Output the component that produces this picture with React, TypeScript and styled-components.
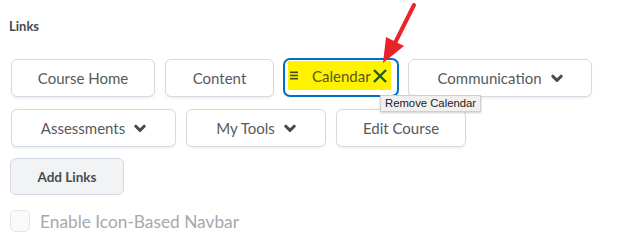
import styled, { createGlobalStyle } from "styled-components";

const Global = createGlobalStyle`
  body {
    margin: 0;
    background: #ffffff;
    font-family: Lato, "Open Sans", sans-serif;
  }
`;

const Page = styled.div`
  position: relative;
  width: 623px;
  height: 252px;
  padding: 18px 0 0 10px;
  box-sizing: border-box;
  overflow: hidden;
`;

const Label = styled.div`
  font-size: 13px;
  font-weight: 700;
  color: #494c4e;
  line-height: 16px;
  margin: 0 0 25px -1px;
`;

const Row = styled.div`
  display: flex;
  gap: 10px;
  margin-bottom: 12px;
  padding-left: 1px;
`;

const NavButton = styled.div<{ $w: number }>`
  position: relative;
  display: flex;
  align-items: center;
  justify-content: center;
  gap: 9px;
  width: ${(p) => p.$w}px;
  height: 38px;
  box-sizing: border-box;
  border: 1px solid #d3d9e3;
  border-radius: 6px;
  box-shadow: 0 2px 2px rgba(0, 0, 0, 0.05);
  font-size: 15px;
  color: #565a5c;
  background: #ffffff;
`;

const Selected = styled.div`
  position: relative;
  width: 116px;
  height: 39px;
  margin: -1px -1px 0;
  box-sizing: border-box;
  border: 2px solid #006fbf;
  border-radius: 7px;
  padding: 1px 6px 5px 3px;
  background: #ffffff;
`;

const Highlight = styled.div`
  display: flex;
  align-items: center;
  height: 100%;
  background: #fff200;
  padding: 0 0 0 2px;
  font-size: 15px;
  color: #58581e;
`;

const CalText = styled.span`
  margin: 0 1px 0 13px;
`;

const Tooltip = styled.div`
  position: absolute;
  left: 95px;
  top: 35px;
  z-index: 2;
  white-space: nowrap;
  padding: 1px 4px 2px;
  font-family: "Liberation Sans", Arial, sans-serif;
  font-size: 11.3px;
  color: #222222;
  background: #f2f0ef;
  border: 1px solid #cfcfcf;
  box-shadow: 0 1px 2px rgba(0, 0, 0, 0.2);
`;

const AddButton = styled.div`
  display: flex;
  align-items: center;
  justify-content: center;
  width: 114px;
  height: 37px;
  box-sizing: border-box;
  border: 1px solid #d3d9e3;
  border-radius: 6px;
  background: #f1f3f5;
  font-size: 13.5px;
  font-weight: 700;
  color: #494c4e;
  margin-top: -1px;
`;

const CheckRow = styled.div`
  display: flex;
  align-items: center;
  gap: 10px;
  margin-top: 15px;
`;

const Box = styled.div`
  width: 20px;
  height: 22px;
  box-sizing: border-box;
  border: 1px solid #e3e6e9;
  border-radius: 5px;
  background: #f9fafb;
`;

const CheckLabel = styled.span`
  font-size: 17.3px;
  color: #a6a9ab;
`;

const Arrow = styled.svg`
  position: absolute;
  left: 370px;
  top: 0;
  z-index: 3;
`;

function Chevron() {
  return (
    <svg width="12" height="9" viewBox="0 0 12 9">
      <polyline
        points="1.8,2.2 6,6.4 10.2,2.2"
        fill="none"
        stroke="#494c4e"
        strokeWidth="3"
        strokeLinecap="round"
        strokeLinejoin="round"
      />
    </svg>
  );
}

function Hamburger() {
  return (
    <svg width="9" height="9" viewBox="0 0 9 9">
      <rect x="0" y="0.5" width="8" height="1.6" fill="#4a4a20" />
      <rect x="0" y="3.7" width="8" height="1.6" fill="#4a4a20" />
      <rect x="0" y="6.9" width="8" height="1.6" fill="#4a4a20" />
    </svg>
  );
}

function Cross() {
  return (
    <svg width="16" height="16" viewBox="0 0 16 16">
      <path d="M2 2 L14 14 M14 2 L2 14" stroke="#1f5a1f" strokeWidth="2.4" />
    </svg>
  );
}

export default function App() {
  return (
    <>
      <Global />
      <Page>
        <Label>Links</Label>
        <Row>
          <NavButton $w={144}>Course Home</NavButton>
          <NavButton $w={109}>Content</NavButton>
          <Selected>
            <Highlight>
              <Hamburger />
              <CalText>Calendar</CalText>
              <Cross />
            </Highlight>
            <Tooltip>Remove Calendar</Tooltip>
          </Selected>
          <NavButton $w={184}>
            Communication <Chevron />
          </NavButton>
        </Row>
        <Row>
          <NavButton $w={165}>
            Assessments <Chevron />
          </NavButton>
          <NavButton $w={140}>
            My Tools <Chevron />
          </NavButton>
          <NavButton $w={130}>Edit Course</NavButton>
        </Row>
        <AddButton>Add Links</AddButton>
        <CheckRow>
          <Box />
          <CheckLabel>Enable Icon-Based Navbar</CheckLabel>
        </CheckRow>
        <Arrow width="60" height="70" viewBox="0 0 60 70">
          <line x1="44" y1="5" x2="25" y2="43" stroke="#e8232a" strokeWidth="4" strokeLinecap="round" />
          <polygon points="13,63 16,37 34,46" fill="#e8232a" />
        </Arrow>
      </Page>
    </>
  );
}
